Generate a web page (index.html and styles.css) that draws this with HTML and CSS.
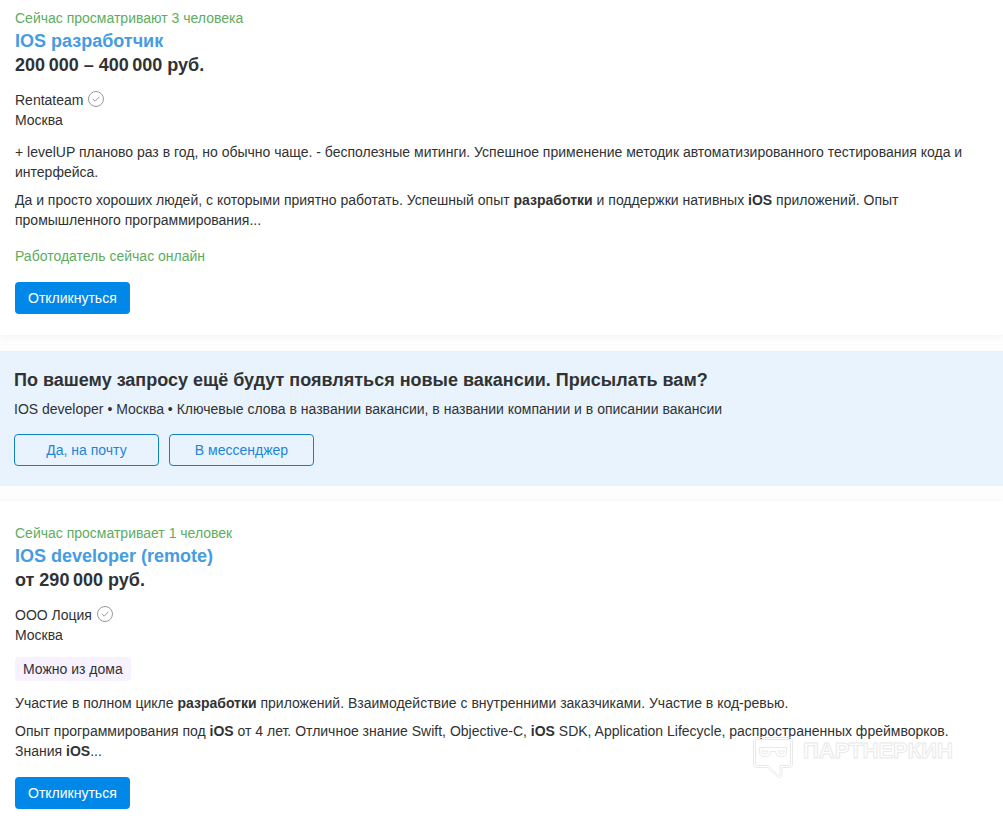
FILE: index.html
```
<!DOCTYPE html>
<html lang="ru">

<head>
    <meta charset="UTF-8">
    <meta name="viewport" content="width=device-width, initial-scale=1.0">
    <title>Вакансии IOS developer</title>
    <link rel="stylesheet" href="styles.css">
</head>

<body>
    <main class="vacancy-list">
        <article class="vacancy">
            <p class="online">Сейчас просматривают 3 человека</p>
            <h2 class="vacancy-title"><a href="#">IOS разработчик</a></h2>
            <p class="salary">200&#8239;000 – 400&#8239;000 руб.</p>

            <div class="company">
                <span>Rentateam</span>
                <svg class="verified" viewBox="0 0 16 16" aria-hidden="true">
                    <circle cx="8" cy="8" r="7.5" />
                    <path d="M4.8 8l2.3 2.2 4.3-4.4" />
                </svg>
            </div>
            <p class="city">Москва</p>

            <div class="description">
                <p>+ levelUP планово раз в год, но обычно чаще. - бесполезные митинги. Успешное применение методик автоматизированного тестирования кода и интерфейса.</p>
                <p>Да и просто хороших людей, с которыми приятно работать. Успешный опыт <b>разработки</b> и поддержки нативных <b>iOS</b> приложений. Опыт промышленного программирования...</p>
            </div>

            <p class="online employer-online">Работодатель сейчас онлайн</p>
            <button type="button" class="btn btn-primary">Откликнуться</button>
        </article>

        <section class="subscribe">
            <h2>По вашему запросу ещё будут появляться новые вакансии. Присылать вам?</h2>
            <p>IOS developer • Москва • Ключевые слова в названии вакансии, в названии компании и в описании вакансии</p>
            <div class="subscribe-actions">
                <button type="button" class="btn btn-outline">Да, на почту</button>
                <button type="button" class="btn btn-outline">В мессенджер</button>
            </div>
        </section>

        <article class="vacancy">
            <p class="online">Сейчас просматривает 1 человек</p>
            <h2 class="vacancy-title"><a href="#">IOS developer (remote)</a></h2>
            <p class="salary">от 290&#8239;000 руб.</p>

            <div class="company">
                <span>ООО Лоция</span>
                <svg class="verified" viewBox="0 0 16 16" aria-hidden="true">
                    <circle cx="8" cy="8" r="7.5" />
                    <path d="M4.8 8l2.3 2.2 4.3-4.4" />
                </svg>
            </div>
            <p class="city">Москва</p>
            <span class="tag">Можно из дома</span>

            <div class="description">
                <p>Участие в полном цикле <b>разработки</b> приложений. Взаимодействие с внутренними заказчиками. Участие в код-ревью.</p>
                <p>Опыт программирования под <b>iOS</b> от 4 лет. Отличное знание Swift, Objective-C, <b>iOS</b> SDK, Application Lifecycle, распространенных фреймворков. Знания <b>iOS</b>...</p>
            </div>

            <button type="button" class="btn btn-primary">Откликнуться</button>
        </article>
    </main>

    <div class="watermark">
        <svg class="watermark-logo" viewBox="0 0 40 42" aria-hidden="true">
            <path d="M3.5.5h33q3 0 3 3v24q0 3-3 3H29v7q-1 5-4 2.500L14 30.500H3.500q-3 0-3-3v-24q0-3 3-3z" />
            <path d="M5 2.500h30q2.500 0 2.500 2.500v21q0 2.500-2.500 2.500h-8v9q-.5 1.500-2 .5L15 28.500H5q-2.500 0-2.500-2.500V5q0-2.500 2.500-2.500z" />
            <path d="M6.500 10.500h27v4q0 5-4.500 5h-2q-4 0-4.500-5h-5q-.5 5-4.500 5h-2q-4.500 0-4.500-5z" />
            <path d="M8.500 14h6q0 3-3 3t-3-3zM25.500 14h6q0 3-3 3t-3-3z" />
        </svg>
        <svg class="watermark-name" viewBox="0 0 152 28">
            <text x="1" y="21">ПАРТНЕРКИН</text>
        </svg>
    </div>
</body>

</html>
```
FILE: styles.css
```
:root {
    --primary-color: #0088e8;
    --outline-color: #0f83bd;
    --link-color: #459ce2;
    --online-color: #5dac61;
    --text-color: #303233;
    --banner-bg: #e8f3fe;
    --tag-bg: #f8f1ff;
    --font-family: "Liberation Sans", Arial, sans-serif;
}

* {
    box-sizing: border-box;
}

body {
    margin: 0;
    background-color: #fff;
    color: var(--text-color);
    font-family: var(--font-family);
    font-size: 14px;
    line-height: 20px;
}

h2,
p {
    margin: 0;
}

.vacancy-list {
    position: relative;
    background: #fdfdfd;
}

/* --- Вакансия --- */
.vacancy {
    padding: 22px 15px 20px;
    background: #fff;
    box-shadow: 0 1px 8px rgba(0, 0, 0, 0.05);
}

.vacancy:first-child {
    padding-top: 8px;
    padding-bottom: 21px;
}

.online {
    color: var(--online-color);
}

.vacancy-title {
    margin-top: 1px;
    font-size: 18px;
    line-height: 24px;
}

.vacancy-title a {
    color: var(--link-color);
    text-decoration: none;
}

.salary {
    font-size: 18px;
    font-weight: 700;
    line-height: 24px;
}

.company {
    display: flex;
    gap: 5px;
    margin-top: 13px;
}

.verified {
    width: 16px;
    height: 16px;
    margin-top: 1px;
    fill: none;
    stroke: #999;
}

.tag {
    display: inline-block;
    margin-top: 12px;
    padding: 2px 8px;
    border-radius: 4px;
    background: var(--tag-bg);
    vertical-align: top;
}

.description {
    display: grid;
    gap: 8px;
    margin: 12px 0 16px;
}

.employer-online {
    margin-bottom: 16px;
}

/* --- Кнопки --- */
.btn {
    display: block;
    height: 32px;
    padding: 0 12px;
    border: 1px solid transparent;
    border-radius: 4px;
    font-family: inherit;
    font-size: 14px;
    line-height: 20px;
    cursor: pointer;
}

.btn-primary {
    background: var(--primary-color);
    color: #fff;
}

.btn-outline {
    min-width: 145px;
    border-color: var(--outline-color);
    background: transparent;
    color: #1f84d6;
}

/* --- Подписка на поиск --- */
.subscribe {
    position: relative;
    margin: 16px 0 15px;
    padding: 17px 14px 20px;
    background: var(--banner-bg);
}

.subscribe h2 {
    font-size: 18px;
    line-height: 24px;
}

.subscribe p {
    margin-top: 7px;
}

.subscribe-actions {
    display: flex;
    flex-wrap: wrap;
    gap: 10px;
    margin-top: 15px;
}

/* --- Водяной знак --- */
.watermark {
    position: absolute;
    top: 737px;
    right: 49px;
    display: flex;
    gap: 9px;
    pointer-events: none;
}

.watermark svg {
    fill: none;
    stroke: #e9e9e9;
}

.watermark-logo {
    width: 40px;
    height: 42px;
}

.watermark-name {
    width: 152px;
    height: 28px;
    font-size: 22px;
    font-weight: 700;
}
```
